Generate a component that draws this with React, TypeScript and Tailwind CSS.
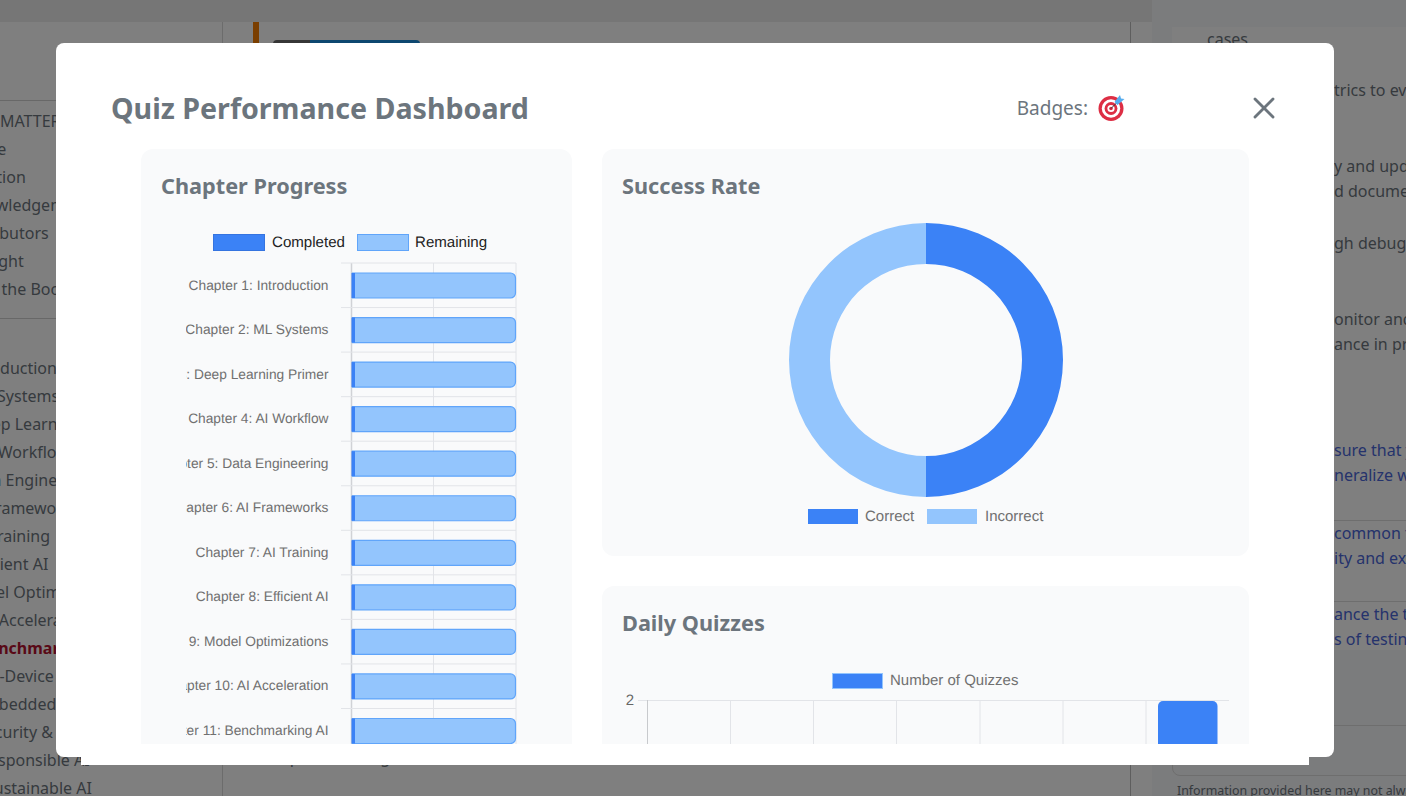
import { X } from "lucide-react";

const topItems = [
  { t: "FRONT MATTER", c: "-ml-[56px]" },
  { t: "Preface", c: "-ml-[50px]" },
  { t: "Dedication", c: "-ml-[55px]" },
  { t: "Acknowledgements", c: "-ml-[50px]" },
  { t: "Contributors", c: "-ml-[47px]" },
  { t: "Copyright", c: "-ml-[50px]" },
  { t: "About the Book", c: "-ml-[48px]" },
];

const chapters = [
  { t: "Introduction", c: "-ml-[37px]" },
  { t: "ML Systems", c: "-ml-[30px]" },
  { t: "Deep Learning Primer", c: "-ml-[29px]" },
  { t: "AI Workflow", c: "-ml-[22px]" },
  { t: "Data Engineering", c: "-ml-[34px]" },
  { t: "AI Frameworks", c: "-ml-[33px]" },
  { t: "AI Training", c: "-ml-[31px]" },
  { t: "Efficient AI", c: "-ml-[32px]" },
  { t: "Model Optimizations", c: "-ml-[38px]" },
  { t: "AI Acceleration", c: "-ml-[21px]" },
  { t: "Benchmarking AI", c: "-ml-[22px] font-bold text-[#b3122f]" },
  { t: "On-Device Learning", c: "-ml-[23px]" },
  { t: "Embedded AI", c: "-ml-[25px]" },
  { t: "Security & Privacy", c: "-ml-[23px]" },
  { t: "Responsible AI", c: "-ml-[21px]" },
  { t: "Sustainable AI", c: "-ml-[15px]" },
];

const bars = [
  "Chapter 1: Introduction",
  "Chapter 2: ML Systems",
  "Chapter 3: Deep Learning Primer",
  "Chapter 4: AI Workflow",
  "Chapter 5: Data Engineering",
  "Chapter 6: AI Frameworks",
  "Chapter 7: AI Training",
  "Chapter 8: Efficient AI",
  "Chapter 9: Model Optimizations",
  "Chapter 10: AI Acceleration",
  "Chapter 11: Benchmarking AI",
];

function ProgressChart() {
  const rowH = 44.55;
  const y0 = 38;
  const gridLeft = 165.5;
  const gridMid = 247.5;
  const gridRight = 330;
  return (
    <svg width={341} height={530} textRendering="geometricPrecision" className="mx-auto block [font-family:'Liberation_Sans',sans-serif]">
      <rect x={27.5} y={9.5} width={51} height={16} fill="#3b82f6" stroke="#3574e0" />
      <text x={86} y={22} fontSize={15.1} fill="#222">Completed</text>
      <rect x={171.5} y={9.5} width={51} height={16} fill="#93c5fd" stroke="#60a5fa" />
      <text x={229} y={22} fontSize={15.1} fill="#222">Remaining</text>
      <line x1={gridMid} x2={gridMid} y1={y0} y2={530} stroke="#e2e4e8" />
      <line x1={gridRight} x2={gridRight} y1={y0} y2={530} stroke="#e2e4e8" />
      <line x1={gridLeft} x2={gridLeft} y1={y0} y2={530} stroke="#d0d2d6" strokeWidth={1.5} />
      {bars.map((label, i) => {
        const top = y0 + i * rowH;
        const by = top + 10;
        return (
          <g key={label}>
            <line x1={155} x2={gridRight} y1={top} y2={top} stroke="#e2e4e8" />
            <text x={142.5} y={top + 26.5} textAnchor="end" fontSize={13.75} fill="#707070">{label}</text>
            <path
              d={`M166.5 ${by} H324.5 a5 5 0 0 1 5 5 V${by + 20} a5 5 0 0 1 -5 5 H166.5 Z`}
              fill="#93c5fd"
              stroke="#60a5fa"
              strokeWidth={1.2}
            />
            <rect x={165.5} y={by} width={3.5} height={25} fill="#3b82f6" />
          </g>
        );
      })}
    </svg>
  );
}

function Donut() {
  return (
    <svg width={607} height={315} textRendering="geometricPrecision" className="block [font-family:'Liberation_Sans',sans-serif]">
      <path d="M304 8 A137 137 0 0 1 304 282 L304 241 A96 96 0 0 0 304 49 Z" fill="#3b82f6" />
      <path d="M304 8 A137 137 0 0 0 304 282 L304 241 A96 96 0 0 1 304 49 Z" fill="#93c5fd" />
      <rect x={186} y={294} width={50} height={15} fill="#3b82f6" />
      <text x={243} y={306} fontSize={15} fill="#707070">Correct</text>
      <rect x={305} y={294} width={50} height={15} fill="#93c5fd" />
      <text x={363} y={306} fontSize={15} fill="#707070">Incorrect</text>
    </svg>
  );
}

function DailyChart() {
  const xs = [25.5, 108.5, 191.5, 274.5, 358, 441, 524];
  return (
    <svg width={607} height={120} textRendering="geometricPrecision" className="block [font-family:'Liberation_Sans',sans-serif]">
      <rect x={210.5} y={9.5} width={50} height={15} fill="#3b82f6" stroke="#93c5fd" />
      <text x={268} y={20.5} fontSize={15} fill="#707070">Number of Quizzes</text>
      <text x={8} y={41} textAnchor="middle" fill="#666" fontSize={15}>2</text>
      <line x1={16} x2={607} y1={36.5} y2={36.5} stroke="#e2e4e8" />
      {xs.map((x, i) => (
        <line key={x} x1={x} x2={x} y1={36} y2={120} stroke={i === 0 ? "#c8cacd" : "#e2e4e8"} />
      ))}
      <path d="M536 120 V42 a5 5 0 0 1 5 -5 H590.5 a5 5 0 0 1 5 5 V120 Z" fill="#3b82f6" />
    </svg>
  );
}

function TargetBadge() {
  return (
    <svg width={28} height={28} viewBox="0 0 28 28" className="shrink-0">
      <circle cx={14} cy={14.5} r={12.5} fill="#dd2e44" />
      <circle cx={14} cy={14.5} r={9.2} fill="#ffffff" />
      <circle cx={14} cy={14.5} r={6.4} fill="#dd2e44" />
      <circle cx={14} cy={14.5} r={3.6} fill="#ffffff" />
      <circle cx={14} cy={14.5} r={1.8} fill="#dd2e44" />
      <line x1={14} y1={14.5} x2={20} y2={8.5} stroke="#31373d" strokeWidth={1} />
      <path d="M17.5 8 L23 1 L24 4.5 L27.5 5 L20.5 11 Z" fill="#55acee" />
    </svg>
  );
}

function Background() {
  return (
    <div className="flex h-[796px] w-[1406px] bg-white text-[16px] leading-[25px] text-[#6c757d]">
      <div className="flex h-[796px] w-[1152px] flex-col overflow-hidden">
        <div className="h-[22px] shrink-0 bg-[#ececec]" />
        <div className="flex h-[774px] shrink-0">
          <aside className="w-[223px] shrink-0 overflow-hidden border-r border-[#d8d8d8] bg-white pt-[78px]">
            <div className="border-t border-[#d0d0d0] pt-[6px] pb-[15px]">
              {topItems.map((i) => (
                <div key={i.t} className={`h-[28px] whitespace-nowrap leading-[28px] ${i.c}`}>{i.t}</div>
              ))}
            </div>
            <div className="border-t border-[#d0d0d0] pt-[35px]">
              {chapters.map((i) => (
                <div key={i.t} className={`h-[28px] whitespace-nowrap leading-[28px] ${i.c}`}>{i.t}</div>
              ))}
            </div>
          </aside>
          <main className="w-[908px] shrink-0 border-r border-[#bdbdbd] pl-[30px]">
            <div className="flex h-[60px] gap-[14px]">
              <div className="h-full w-[6px] bg-[#f57c00]" />
              <div className="mt-[18px] flex h-[30px] w-[147px] overflow-hidden rounded-t">
                <div className="w-[37px] bg-[#6c6c6c]" />
                <div className="flex-1 bg-[#1a8fe0]" />
              </div>
            </div>
            <p className="mt-[663px] pl-[2px]">Compared testing</p>
          </main>
        </div>
      </div>
      <aside className="w-[254px] shrink-0 overflow-hidden bg-[#f7f8fa] pt-[27px]">
        <div className="ml-[20px] h-[623px] bg-white">
          <p className="pl-[35px]">cases</p>
          <div className="pl-[162px] whitespace-nowrap">
            <p className="mt-[26px]">trics to evaluate</p>
            <p className="mt-[51px]">y and update</p>
            <p>d documentation</p>
            <p className="mt-[27px]">gh debugging</p>
            <p className="mt-[51px]">onitor and</p>
            <p>ance in production</p>
          </div>
          <div className="whitespace-nowrap text-[#4a66d8]">
            <div className="pl-[162px]">
              <p className="mt-[81px]">sure that your</p>
              <p>neralize well</p>
            </div>
            <div className="mt-[32px] border-t border-[#dcdcdc] pl-[162px]">
              <p>common tests</p>
              <p>ity and explain</p>
            </div>
            <div className="mt-[30px] border-t border-[#dcdcdc] pl-[162px]">
              <p>ance the trust</p>
              <p>s of testing</p>
            </div>
          </div>
        </div>
        <div className="mt-[75px] ml-[20px] h-[51px] w-[300px] rounded-bl-lg border border-[#dcdcdc]" />
        <p className="mt-[7px] ml-[25px] whitespace-nowrap text-[12.4px] leading-[16px]">
          Information provided here may not always be accurate
        </p>
      </aside>
    </div>
  );
}

export default function App() {
  return (
    <div className="relative h-[796px] w-[1406px] overflow-hidden [font-family:'Noto_Sans',Lato,sans-serif]">
      <Background />
      <div className="absolute inset-0 bg-black/50" />
      <div className="absolute top-[43px] left-[56px] h-[714px] w-[1278px] rounded-lg bg-white">
        <div className="mr-[25px] ml-[25px] h-[722px] bg-white pt-[41px] pl-[30px]">
          <header className="mb-[17px] flex h-[48px] items-center pr-[27px]">
            <h2 className="text-[28.6px] font-bold text-[#6c757d]">Quiz Performance Dashboard</h2>
            <div className="ml-auto flex items-center gap-[9px]">
              <span className="text-[19px] text-[#6c757d]">Badges:</span>
              <TargetBadge />
            </div>
            <button className="ml-[121px] text-[#6c757d]">
              <X size={36} strokeWidth={1.9} />
            </button>
          </header>
          <div className="ml-[30px] grid h-[595px] w-[1108px] grid-cols-[431px_647px] gap-[30px] overflow-hidden">
            <section className="h-[800px] rounded-xl bg-[#f9fafb] px-5 pt-5">
              <h3 className="mb-[22px] h-[34px] text-[21.7px] leading-[33px] font-bold text-[#6c757d]">Chapter Progress</h3>
              <ProgressChart />
            </section>
            <div className="flex flex-col gap-[30px]">
              <section className="h-[407px] shrink-0 rounded-xl bg-[#f9fafb] px-5 pt-5">
                <h3 className="mb-[12px] h-[34px] text-[21.7px] leading-[33px] font-bold text-[#6c757d]">Success Rate</h3>
                <Donut />
              </section>
              <section className="h-[400px] shrink-0 rounded-xl bg-[#f9fafb] px-5 pt-5">
                <h3 className="mb-[24px] h-[34px] text-[21.7px] leading-[34px] font-bold text-[#6c757d]">Daily Quizzes</h3>
                <DailyChart />
              </section>
            </div>
          </div>
        </div>
      </div>
    </div>
  );
}
